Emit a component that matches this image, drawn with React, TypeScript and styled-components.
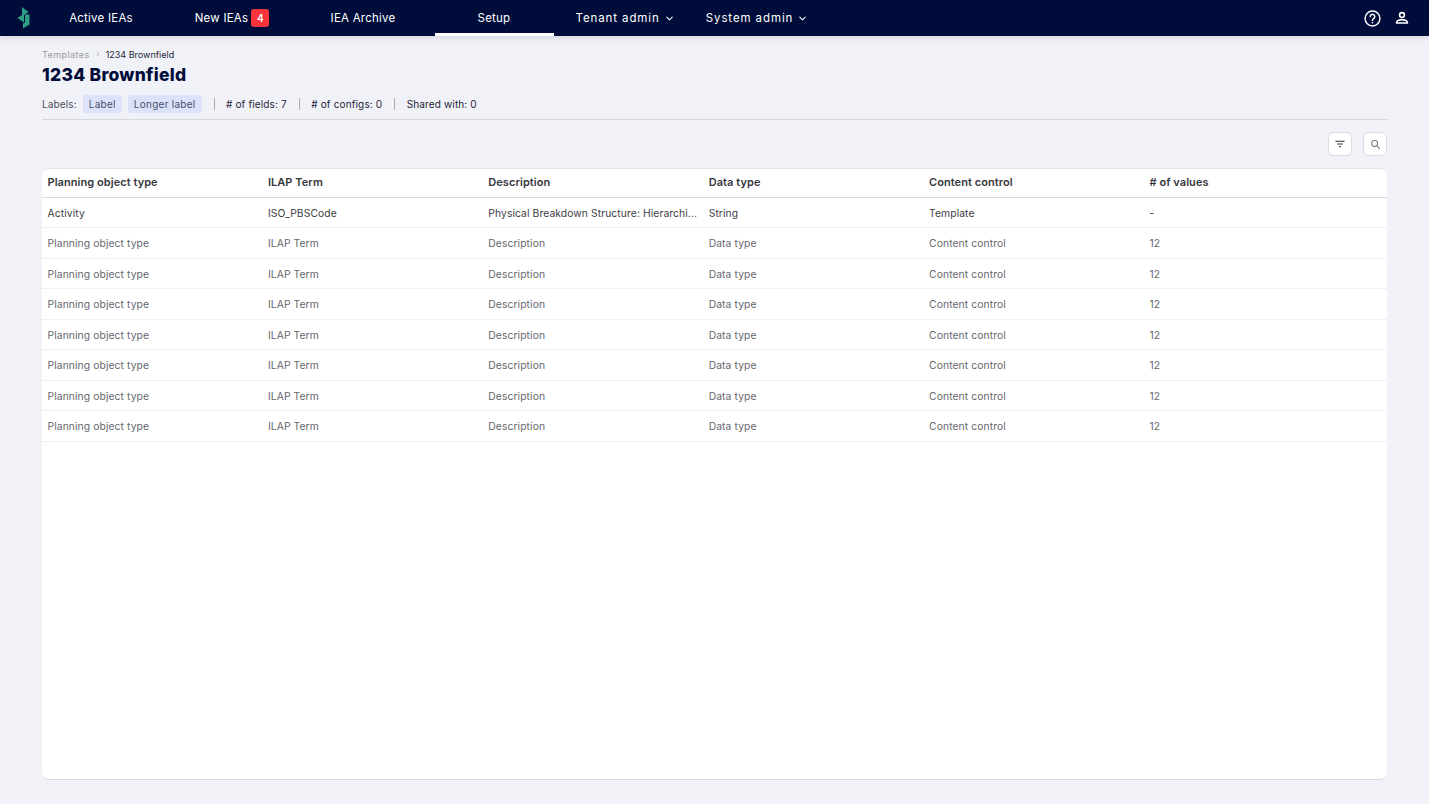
import React from "react";
import styled, { createGlobalStyle } from "styled-components";
import { ChevronDown, ChevronRight } from "lucide-react";

const Global = createGlobalStyle`
  html, body { margin: 0; padding: 0; background: #f1f2f7; }
  body { font-family: Inter, "Liberation Sans", sans-serif; }
`;
const Page = styled.div`
  width: 1429px; height: 804px; overflow: hidden; display: flex; flex-direction: column;
`;
const Nav = styled.nav`
  height: 36px; flex: none; background: #000d3a; display: flex; align-items: stretch; gap: 12px;
  box-shadow: 0 2px 6px rgba(0, 13, 58, 0.12); position: relative;
`;
const LogoBox = styled.div`
  width: 29.5px; flex: none; display: flex; padding-left: 17px; align-items: center; margin-right: -17px;
`;
const NavItem = styled.a<{ $active?: boolean }>`
  width: 119px; flex: none; display: flex; align-items: center; justify-content: center; gap: 3px;
  box-sizing: border-box; color: #fff; font-size: 11.5px; letter-spacing: 0.22px;
  border-bottom: 3px solid ${p => (p.$active ? "#fff" : "transparent")};
  padding-top: 3px;
`;
const NavMenu = styled.a`
  flex: none; display: flex; align-items: center; gap: 4px; padding: 0 9px 0 10px; color: #fff;
  font-size: 11.5px; letter-spacing: 0.9px;
`;
const Badge = styled.span`
  background: #f8333c; color: #fff; font-size: 10px; font-weight: 600; border-radius: 3px;
  width: 18px; height: 18px; display: flex; align-items: center; justify-content: center; letter-spacing: 0;
`;
const NavIcons = styled.div`
  margin-left: auto; display: flex; align-items: center; gap: 13px; padding-right: 19px;
`;
const Main = styled.main`
  flex: 1; display: flex; flex-direction: column; padding: 0 42px 24px;
`;
const Crumbs = styled.div`
  display: flex; align-items: center; gap: 4px; height: 12px; margin-top: 12px; font-size: 9px; color: #22263a;
`;
const CrumbLink = styled.span`
  color: #9a9ca6; letter-spacing: 0.42px;
`;
const Title = styled.h1`
  margin: 4px 0 0; font-size: 17.5px; line-height: 22px; font-weight: 800; color: #000d3a; letter-spacing: 0.25px;
`;
const Meta = styled.div`
  display: flex; align-items: center; height: 18px; margin-top: 8.5px; padding-bottom: 6.5px;
  border-bottom: 1px solid #d6d7dc; font-size: 10px; letter-spacing: 0.14px; color: #1d2238; box-sizing: content-box;
`;
const MetaLabel = styled.span`
  color: #4c4f5e; margin-right: 6px;
`;
const ChipGroup = styled.div`
  display: flex; gap: 6px; margin-right: 12px;
`;
const Chip = styled.span`
  background: #dce2fa; color: #4a4f6b; height: 18px; padding: 0 6px; border-radius: 3px;
  display: flex; align-items: center; letter-spacing: 0.27px;
`;
const Stat = styled.span`
  border-left: 1px solid #a9abb4; height: 12px; display: flex; align-items: center; padding: 0 12px 0 11.5px;
`;
const Tools = styled.div`
  display: flex; justify-content: flex-end; gap: 11px; margin-top: 12px;
`;
const ToolButton = styled.button`
  width: 24px; height: 24px; padding: 0; background: #fff; border: 1px solid #dcdde2; border-radius: 6px;
  display: flex; align-items: center; justify-content: center;
`;
const Card = styled.section`
  flex: 1; margin-top: 12px; background: #fff; border-top: 1px solid #e3e4e9; border-bottom: 1px solid #d9dade;
  border-radius: 7px; overflow: hidden;
`;
const Row = styled.div<{ $head?: boolean; $strong?: boolean }>`
  display: grid; grid-template-columns: repeat(6, 220.4px); align-items: center; box-sizing: border-box;
  height: ${p => (p.$head ? "28.8px" : "30.5px")};
  padding-bottom: ${p => (p.$head ? "2px" : "0")};
  border-bottom: 1px solid ${p => (p.$head ? "#d9dade" : "#f0f0f3")};
  font-size: ${p => (p.$head ? "11px" : "10.3px")};
  letter-spacing: ${p => (p.$head ? "0.06px" : "0.1px")};
  font-weight: ${p => (p.$head ? 600 : 400)};
  color: ${p => (p.$head ? "#37383e" : p.$strong ? "#3c3d43" : "#66676d")};
`;
const Cell = styled.div`
  padding: 0 5.5px; white-space: nowrap;
`;

const columns = ["Planning object type", "ILAP Term", "Description", "Data type", "Content control", "# of values"];
const first = ["Activity", "ISO_PBSCode", "Physical Breakdown Structure: Hierarchi...", "String", "Template", "-"];
const filler = ["Planning object type", "ILAP Term", "Description", "Data type", "Content control", "12"];

const Logo = () => (
  <svg width="14" height="22" viewBox="0 0 14 22" fill="#2f9e86">
    <polygon points="5,0 11.5,5 5,9.5" />
    <polygon points="0.5,11 7,6.5 7,15.5" />
    <polygon points="8,7.5 12.5,7.5 12.5,17.5 6,21.5 6,16.5 8,15.5" />
  </svg>
);
const Help = () => (
  <svg width="17" height="17" viewBox="0 0 24 24" fill="none" stroke="#fff" strokeWidth="2">
    <circle cx="12" cy="12" r="10.5" />
    <path d="M8.8 9.3a3.2 3.2 0 1 1 5 2.6c-1.2.8-1.8 1.4-1.8 2.8" strokeLinecap="round" />
    <path d="M12 17v1.8" />
  </svg>
);
const Person = () => (
  <svg width="16" height="16" viewBox="0 0 24 24" fill="none" stroke="#fff" strokeWidth="2.4">
    <circle cx="12" cy="7.5" r="3.6" />
    <path d="M4 19.5v-1c0-2.6 5-4 8-4s8 1.4 8 4v1z" />
  </svg>
);
const FilterIcon = () => (
  <svg width="12" height="12" viewBox="0 0 24 24" fill="none" stroke="#2c2d33" strokeWidth="2.4">
    <path d="M3 6.5h18M6.5 12h11M10 17.5h4" />
  </svg>
);
const SearchIcon = () => (
  <svg width="11" height="11" viewBox="0 0 24 24" fill="none" stroke="#77787f" strokeWidth="2.2">
    <circle cx="10" cy="10" r="6.5" />
    <path d="M15 15l6.5 6.5" />
  </svg>
);

export default function App() {
  return (
    <Page>
      <Global />
      <Nav>
        <LogoBox><Logo /></LogoBox>
        <NavItem>Active IEAs</NavItem>
        <NavItem>New IEAs <Badge>4</Badge></NavItem>
        <NavItem>IEA Archive</NavItem>
        <NavItem $active>Setup</NavItem>
        <NavMenu>Tenant admin <ChevronDown size={11} strokeWidth={2.2} /></NavMenu>
        <NavMenu>System admin <ChevronDown size={11} strokeWidth={2.2} /></NavMenu>
        <NavIcons><Help /><Person /></NavIcons>
      </Nav>
      <Main>
        <Crumbs>
          <CrumbLink>Templates</CrumbLink>
          <ChevronRight size={8} color="#9a9ca6" />
          <span>1234 Brownfield</span>
        </Crumbs>
        <Title>1234 Brownfield</Title>
        <Meta>
          <MetaLabel>Labels:</MetaLabel>
          <ChipGroup>
            <Chip>Label</Chip>
            <Chip>Longer label</Chip>
          </ChipGroup>
          <Stat># of fields: 7</Stat>
          <Stat># of configs: 0</Stat>
          <Stat>Shared with: 0</Stat>
        </Meta>
        <Tools>
          <ToolButton aria-label="Filter"><FilterIcon /></ToolButton>
          <ToolButton aria-label="Search"><SearchIcon /></ToolButton>
        </Tools>
        <Card>
          <Row $head>{columns.map(c => <Cell key={c}>{c}</Cell>)}</Row>
          <Row $strong>{first.map(c => <Cell key={c}>{c}</Cell>)}</Row>
          {Array.from({ length: 7 }, (_, i) => (
            <Row key={i}>{filler.map(c => <Cell key={c}>{c}</Cell>)}</Row>
          ))}
        </Card>
      </Main>
    </Page>
  );
}
